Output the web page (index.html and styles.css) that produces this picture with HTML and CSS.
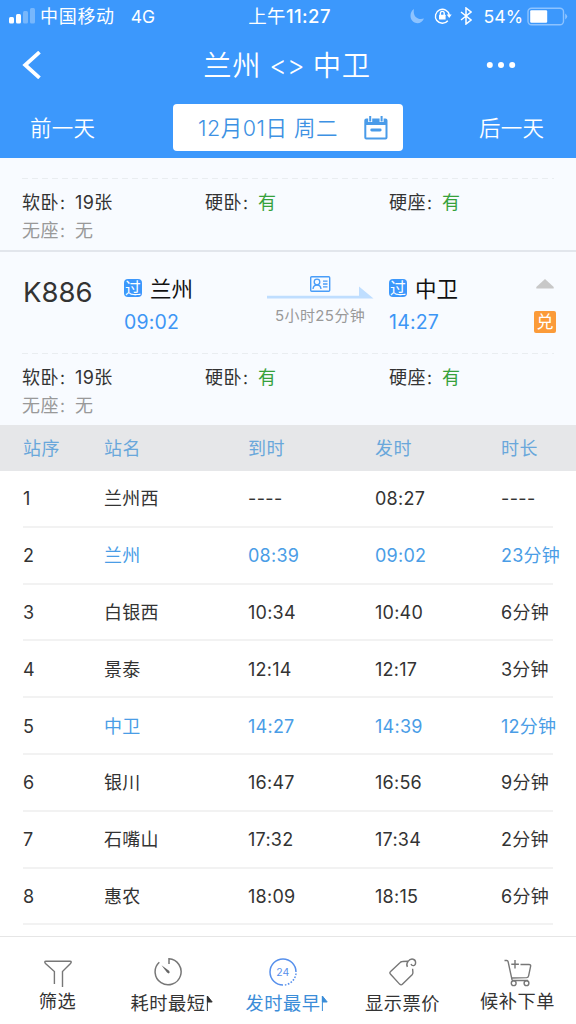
FILE: index.html
```html
<!DOCTYPE html>
<html lang="zh-CN">
<head>
<meta charset="utf-8">
<title>兰州 - 中卫</title>
<link rel="stylesheet" href="styles.css">
</head>
<body>
<header class="top">
  <div class="status">
    <div class="carrier">
      <svg width="27" height="16" viewBox="0 0 27 16" fill="#fff"><rect x="0" y="9" width="5" height="6.5" rx="1.5"/><rect x="7" y="6" width="5" height="9.5" rx="1.5"/><g opacity=".3"><rect x="14" y="3" width="5" height="12.5" rx="1.5"/><rect x="21" y="0" width="5" height="15.5" rx="1.5"/></g></svg>
      <span class="operator">中国移动</span><span class="network">4G</span>
    </div>
    <div class="clock"><span class="period">上午</span>11:27</div>
    <div class="indicators">
      <svg class="moon" width="15" height="16" viewBox="0 0 15 16"><path d="M4 1C-.5 4-.5 10.500 3 13.500S12 15.500 14 10.500C7.500 12.500 2.500 8 4 1z" fill="#8dc3ff"/></svg>
      <svg class="lock" width="18" height="18" viewBox="0 0 18 18" fill="none" stroke="#fff" stroke-width="1.4"><path d="M13.8 13.8A7 7 0 1 1 15.3 8"/><path d="M12.7 7.5h5l-2.500 3.500z" fill="#fff" stroke="none"/><rect x="5" y="7.8" width="6.6" height="4.8" rx=".5" fill="#fff" stroke="none"/><path d="M6.4 8V6.3a1.9 1.9 0 0 1 3.8 0V8"/></svg>
      <svg class="bluetooth" width="12" height="18" viewBox="0 0 12 18" fill="none" stroke="#fff" stroke-width="1.5"><path d="M1 5l10 8-5 4V1l5 4L1 13"/></svg>
      <span class="percent">54%</span>
      <svg width="41" height="19" viewBox="0 0 41 19"><rect x="1" y="1.2" width="35.5" height="16.5" rx="3.5" fill="none" stroke="#8dc3ff" stroke-width="1.4"/><rect x="3.2" y="3.2" width="17" height="12.5" rx="1.2" fill="#fff"/><path d="M38.2 6.5q4 3 0 6z" fill="#8dc3ff"/></svg>
    </div>
  </div>
  <div class="titlebar">
    <svg class="back" width="20" height="28" viewBox="0 0 20 28" fill="none" stroke="#fff" stroke-width="3.8"><path d="M17.500 1.200L3.200 14l14.300 12.800"/></svg>
    <h1 class="route"><span>兰州</span><span class="both">&lt;&gt;</span><span>中卫</span></h1>
    <svg class="more" width="30" height="8" viewBox="0 0 30 8" fill="#fff"><circle cx="3.8" cy="4" r="3"/><circle cx="15" cy="4" r="3"/><circle cx="26.2" cy="4" r="3"/></svg>
  </div>
  <div class="datebar">
    <span class="day">前一天</span>
    <div class="date"><span>12月01日 周二</span>
      <svg width="24" height="24" viewBox="0 0 24 24" fill="none" stroke="#499be9" stroke-width="2"><rect x="1.3" y="3.5" width="21.2" height="19" rx="1"/><path d="M1.3 3h21.2v6H1.3z" fill="#499be9" stroke="none"/><path d="M6.2 0v6M17.6 0v6" stroke="#fff" stroke-width="4"/><path d="M6.2 0v5.5M17.6 0v5.5"/><path d="M7.7 14h8.5" stroke-width="2.8" stroke-linecap="round"/></svg>
    </div>
    <span class="day next">后一天</span>
  </div>
</header>

<section class="train previous">
  <div class="seats">
    <div class="seat"><span class="label">软卧<span class="colon">：</span></span><span>19张</span></div>
    <div class="seat"><span class="label">硬卧<span class="colon">：</span></span><span class="yes">有</span></div>
    <div class="seat"><span class="label">硬座<span class="colon">：</span></span><span class="yes">有</span></div>
    <div class="seat none"><span class="label">无座<span class="colon">：</span></span><span>无</span></div>
  </div>
</section>
<section class="train">
  <div class="summary">
    <div class="number">K886</div>
    <div class="station"><div class="place"><span class="pass">过</span>兰州</div><div class="time">09:02</div></div>
    <div class="journey">
      <svg width="108" height="27" viewBox="0 0 108 27" fill="none"><rect x="43.700" y="2.7" width="19" height="14.5" rx="1" stroke="#499df8" stroke-width="1.4"/><g stroke="#499df8" stroke-width="1.3"><circle cx="50" cy="8" r="2.8"/><path d="M46 15q.4-4 4-4t4 4M56 7.200h4.500M56 10h4.500M56 12.800h4.500"/></g><path d="M0 21.700h92V12.500L106.500 24.500H0z" fill="#bfdeff"/></svg>
      <div class="duration">5小时25分钟</div>
    </div>
    <div class="station"><div class="place"><span class="pass">过</span>中卫</div><div class="time">14:27</div></div>
    <div class="actions"><svg width="18" height="10" viewBox="0 0 18 10"><path d="M9 0l8.7 8v1.500H.3V8z" fill="#c8c8c8"/></svg><span class="redeem">兑</span></div>
  </div>
  <div class="seats">
    <div class="seat"><span class="label">软卧<span class="colon">：</span></span><span>19张</span></div>
    <div class="seat"><span class="label">硬卧<span class="colon">：</span></span><span class="yes">有</span></div>
    <div class="seat"><span class="label">硬座<span class="colon">：</span></span><span class="yes">有</span></div>
    <div class="seat none"><span class="label">无座<span class="colon">：</span></span><span>无</span></div>
  </div>
</section>

<main class="stops">
  <div class="row head"><span>站序</span><span>站名</span><span>到时</span><span>发时</span><span>时长</span></div>
  <div class="row"><span>1</span><span>兰州西</span><span class="dash">----</span><span>08:27</span><span class="dash">----</span></div>
  <div class="row current"><span>2</span><span>兰州</span><span>08:39</span><span>09:02</span><span>23分钟</span></div>
  <div class="row"><span>3</span><span>白银西</span><span>10:34</span><span>10:40</span><span>6分钟</span></div>
  <div class="row"><span>4</span><span>景泰</span><span>12:14</span><span>12:17</span><span>3分钟</span></div>
  <div class="row current"><span>5</span><span>中卫</span><span>14:27</span><span>14:39</span><span>12分钟</span></div>
  <div class="row"><span>6</span><span>银川</span><span>16:47</span><span>16:56</span><span>9分钟</span></div>
  <div class="row"><span>7</span><span>石嘴山</span><span>17:32</span><span>17:34</span><span>2分钟</span></div>
  <div class="row"><span>8</span><span>惠农</span><span>18:09</span><span>18:15</span><span>6分钟</span></div>
</main>

<nav class="tabs">
  <div class="tab raised"><svg width="30" height="30" viewBox="0 0 30 30" fill="none" stroke="#777" stroke-width="1.4"><path d="M11.400 27V14.500L2.500 6.500Q.8 4.500 3 4.300h24Q29.200 4.500 27.500 6.500L19.500 14.500V30"/></svg><span>筛选</span></div>
  <div class="tab sortable"><svg width="30" height="30" viewBox="0 0 30 30" fill="none" stroke="#777" stroke-width="1.5"><path d="M16 7V1.800A13 13 0 1 1 6.300 5.200"/><path d="M8.500 8.200l7.500 5.500q1.500 2-.5 2.700l-1.700-1.200z" fill="#666" stroke="none"/></svg><span>耗时最短<svg class="flag" width="9" height="17" viewBox="0 0 9 17"><path d="M2.400 1v15M2.400 1l4.800 6H2.400z" fill="currentColor" stroke="currentColor" stroke-width="1"/></svg></span></div>
  <div class="tab sortable active"><svg width="30" height="30" viewBox="0 0 30 30" fill="none" stroke="#5790ec" stroke-width="1.5"><path d="M15 28A13 13 0 1 1 28 15"/><path d="M28 16.500A13 13 0 0 1 16.500 28" stroke-dasharray="1.6 1.5"/><text class="hours" x="14.800" y="18.500" text-anchor="middle">24</text></svg><span>发时最早<svg class="flag" width="9" height="17" viewBox="0 0 9 17"><path d="M2.400 1v15M2.400 1l4.800 6H2.400z" fill="currentColor" stroke="currentColor" stroke-width="1"/></svg></span></div>
  <div class="tab"><svg width="30" height="30" viewBox="0 0 30 30" fill="none" stroke="#777" stroke-width="1.4"><path d="M20 4.300l-5.600.2q-1.200 0-2.200 1L2.600 14.500q-1.500 1.300 0 2.800l9 9.800q1.500 1.500 3 0l9.500-9.400q.9-1 .8-2.300l-.3-3.600"/><path d="M19.400 9.800c-2-3.500 1.800-8.500 5.700-7.600 3.500.8 3 5.900.6 6.400-1.600.3-2.300-.5-2.700-1.600"/></svg><span>显示票价</span></div>
  <div class="tab raised"><svg width="30" height="30" viewBox="0 0 30 30" fill="none" stroke="#777" stroke-width="1.4"><path d="M1.500 3.500h2.300q1 0 1.300 1.200l4 18.500M17.500 7.500H26q2 0 1.600 1.800l-2 9.500q-.4 1.700-2 1.800l-15 .4M9 23.500h16M12 3v8.500M8.300 7.300h7.600"/><circle cx="10.700" cy="26.200" r="2.400"/><circle cx="23.500" cy="26.200" r="2.400"/></svg><span>候补下单</span></div>
</nav>
</body>
</html>
```
FILE: styles.css
```css
* { box-sizing: border-box; }
body {
  margin: 0;
  width: 576px;
  height: 1024px;
  overflow: hidden;
  display: flex;
  flex-direction: column;
  background: #fff;
  color: #333;
  font-family: Inter, "Noto Sans CJK SC", sans-serif;
  font-size: 18px;
  font-weight: 385;
  line-height: 24px;
  white-space: nowrap;
}
svg { display: block; flex: none; }

.top { height: 158px; flex: none; background: #3c98fc; color: #fff; }
.status { height: 32px; display: grid; grid-template-columns: 200px 176px 200px; align-items: center; font-size: 18px; }
.carrier { display: flex; align-items: center; padding-left: 9px; }
.carrier svg { margin-top: -1px; }
.operator, .network { padding-top: 1px; }
.operator { margin-left: 4px; letter-spacing: .7px; }
.network { margin-left: 16px; font-size: 17.5px; }
.clock { text-align: center; font-size: 18.5px; font-weight: 500; letter-spacing: .4px; padding-left: 3px; }
.period { font-weight: 400; }
.indicators { display: flex; align-items: center; justify-content: flex-end; padding-right: 8px; }
.lock { margin-left: 9px; }
.bluetooth { margin-left: 8px; }
.percent { margin: 0 4px 0 11px; font-size: 17.7px; padding-top: 1px; }
.titlebar { height: 66px; display: grid; grid-template-columns: 60px 456px 60px; align-items: center; }
.back { margin-left: 22px; }
.route { margin: 0; display: flex; justify-content: center; align-items: center; gap: 8px; font-size: 28.3px; font-weight: 350; letter-spacing: .8px; line-height: 40px; padding: 1px 2px 0 0; }
.both { font-size: 27px; letter-spacing: 0; padding-top: 1px; }
.more { margin-left: -30px; }
.datebar { height: 60px; display: grid; grid-template-columns: 173px 230px 173px; align-items: center; }
.day { padding-left: 30px; font-size: 21.5px; font-weight: 350; letter-spacing: .3px; }
.next { padding-left: 76px; }
.date { height: 47px; background: #fff; border-radius: 4px; color: #3d91e3; display: flex; align-items: center; justify-content: space-between; padding: 0 15px 0 25px; margin-top: -1px; font-size: 21.5px; font-weight: 350; letter-spacing: .5px; }

.train { flex: none; background: #f8fbff; border-bottom: 2px solid #e2e6ec; }
.train:last-of-type { border-bottom: 0; height: 173px; }
.previous { height: 94px; padding-top: 20px; }
.summary { height: 101px; display: grid; grid-template-columns: 124px 143px 122px 138px 49px; }
.number { padding: 21px 0 0 23px; font-size: 27.5px; line-height: 39px; }
.place { display: flex; align-items: center; margin-top: 21px; font-size: 21.5px; line-height: 32px; color: #111; }
.pass { width: 18px; height: 18px; margin: -3px 8px 0 0; border-radius: 4px; background: #3c98fc; color: #fff; font-size: 16px; line-height: 18px; text-align: center; }
.time { margin-top: 4px; font-size: 19.5px; line-height: 27px; letter-spacing: .2px; color: #3d96f5; }
.journey { padding-top: 22px; }
.duration { margin-top: 4px; padding-left: 8px; font-size: 15px; line-height: 22px; letter-spacing: .4px; color: #999; }
.actions { display: flex; flex-direction: column; align-items: center; padding: 27px 13px 0 0; }
.redeem { margin-top: 22px; width: 22px; height: 22px; border-radius: 2px; background: #fb9b39; color: #fff; font-size: 17px; line-height: 23px; text-align: center; }
.seats { display: grid; grid-template-columns: 183px 184px 1fr; grid-template-rows: 28px 27px; margin: 0 22px; padding-top: 11px; line-height: 28px; background: repeating-linear-gradient(90deg, #e9edf0 0 6px, transparent 6px 10px) top left / 100% 1px no-repeat; }
.seat { display: flex; letter-spacing: .4px; }
.label { width: 53px; flex: none; }
.colon { font-size: 15px; letter-spacing: 0; }
.yes { color: #36a13b; }
.none { color: #999; }

.stops { flex: 1; min-height: 0; }
.row { height: 56.8px; margin: 0 23px; padding-top: 2px; display: grid; grid-template-columns: 81px 144px 127px 126px 1fr; align-items: center; border-bottom: 2px solid #f2f2f2; letter-spacing: .25px; }
.head { height: 46px; margin: 0; padding-left: 23px; border: 0; background: #e6e7e9; color: #69a7db; letter-spacing: .5px; }
.current { color: #4a9de6; }
.current span:first-child { color: #333; }
.dash { letter-spacing: .4px; }

.tabs { height: 88px; flex: none; border-top: 1px solid #e6e6e6; display: grid; grid-template-columns: repeat(5, 115px); padding-top: 20px; }
.tab { display: flex; flex-direction: column; align-items: center; font-size: 18.2px; line-height: 28px; letter-spacing: .5px; }
.tab > span { display: flex; align-items: center; margin-top: 2px; }
.raised > span { margin-top: 0; }
.sortable > svg { margin-right: 9px; }
.active { color: #3b8dd8; }
.hours { font: 10.5px Inter, sans-serif; fill: #5790ec; stroke: none; letter-spacing: 0; }
```
